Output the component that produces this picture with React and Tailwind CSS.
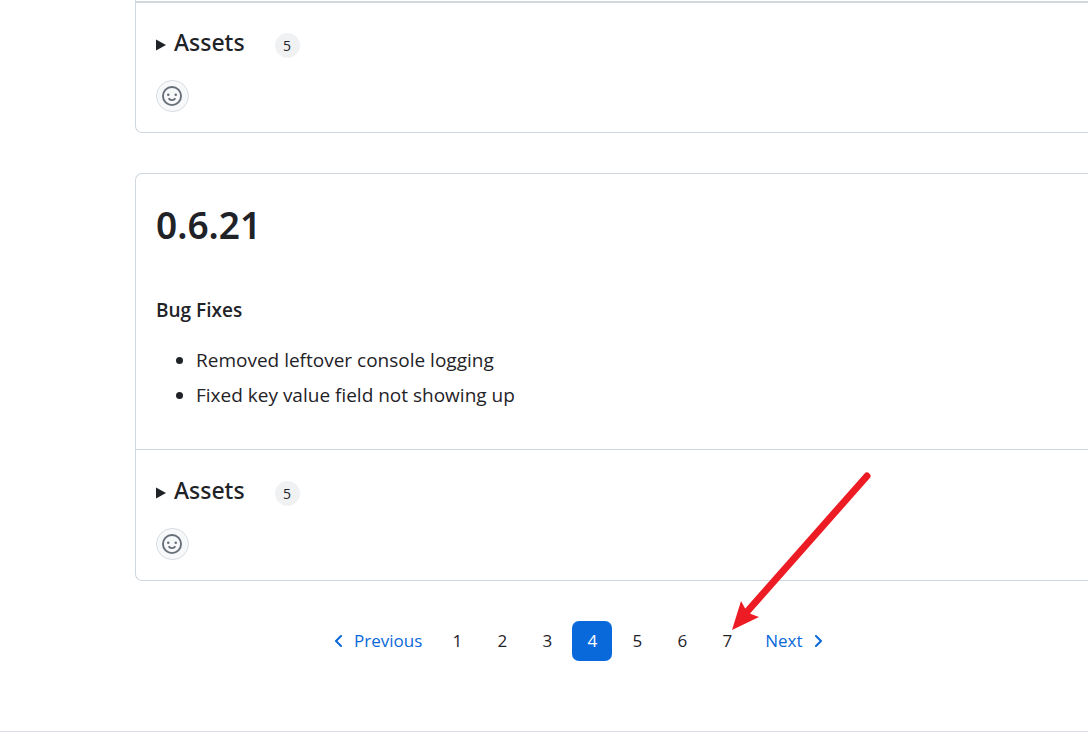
import React from "react";

function Assets({ count }) {
  return (
    <div className="px-5 pt-5 pb-5">
      <details>
        <summary className="flex h-[42px] cursor-pointer list-none items-center [&::-webkit-details-marker]:hidden">
          <svg className="mt-1 mr-2 h-3 w-[10px]" viewBox="0 0 10 12" fill="currentColor" aria-hidden="true">
            <path d="M0 0.5 10 6 0 11.5z" />
          </svg>
          <span className="pb-[2px] font-['Noto_Sans','Open_Sans',sans-serif] text-[23px] leading-[40px] font-medium">Assets</span>
          <span className="mt-1 ml-[30px] flex size-[25px] items-center justify-center rounded-full bg-[#eff1f3] text-[14px] leading-[25px]">
            {count}
          </span>
        </summary>
      </details>
      <button
        type="button"
        aria-label="Add your reaction"
        className="mt-4 flex h-8 w-[33px] items-center justify-start rounded-full border border-[#d8dee4] bg-[#f6f8fa] pl-[5px] text-[#656d76]"
      >
        <svg className="size-5" viewBox="0 0 16 16" fill="currentColor" aria-hidden="true">
          <path d="M8 0a8 8 0 1 1 0 16A8 8 0 0 1 8 0ZM1.5 8a6.5 6.5 0 1 0 13 0 6.5 6.5 0 0 0-13 0Zm3.82 1.636a.75.75 0 0 1 1.038.175l.007.009c.103.118.22.222.35.31.264.178.683.37 1.285.37.602 0 1.02-.192 1.285-.371.13-.088.247-.192.35-.31l.007-.008a.75.75 0 0 1 1.222.87l-.022-.015c.02.013.021.015.021.015v.001l-.001.002-.002.003-.005.007-.014.019a2.066 2.066 0 0 1-.184.213c-.16.166-.338.316-.53.445-.63.418-1.37.638-2.127.629-.946 0-1.652-.308-2.126-.63a3.331 3.331 0 0 1-.715-.657l-.014-.02-.005-.006-.002-.003v-.002h-.001l.613-.432-.614.43a.75.75 0 0 1 .183-1.044ZM12 7a1 1 0 1 1-2 0 1 1 0 0 1 2 0ZM5 8a1 1 0 1 1 0-2 1 1 0 0 1 0 2Z" />
        </svg>
      </button>
    </div>
  );
}

function PageLink({ page, current }) {
  return (
    <a
      href={`#page-${page}`}
      aria-current={current ? "page" : undefined}
      className={
        current
          ? "flex size-10 items-center justify-center rounded-[7px] bg-[#0969da] text-white"
          : "flex size-10 items-center justify-center rounded-[7px]"
      }
    >
      {page}
    </a>
  );
}

export default function App() {
  return (
    <div className="overflow-hidden bg-white font-['Open_Sans','Noto_Sans',sans-serif] text-[#1f2328]">
      <main className="pl-[135px]">
        <section className="rounded-bl-[7px] border-b border-l border-[#d0d7de]">
          <div className="h-[3px] border-b-2 border-[#d0d7de]" />
          <div className="-mt-px">
            <Assets count={5} />
          </div>
        </section>

        <section className="mt-10 rounded-l-[7px] border-y border-l border-[#d0d7de]">
          <div className="border-b border-[#d0d7de] px-5 pt-[21px] pb-[39px]">
            <h1 className="font-['Noto_Sans','Open_Sans',sans-serif] text-[37px] leading-[60px] font-semibold">0.6.21</h1>
            <h2 className="mt-10 text-[19px] leading-[30px] font-semibold">Bug Fixes</h2>
            <ul className="mt-5 list-disc pl-10 text-[19px] leading-[30px]">
              <li>Removed leftover console logging</li>
              <li className="mt-[5px]">Fixed key value field not showing up</li>
            </ul>
          </div>
          <Assets count={5} />
        </section>

        <div className="relative mt-10 ml-[196px]">
          <nav aria-label="Pagination" className="flex h-10 items-center gap-[5px] text-[17px]">
            <a href="#previous" className="mr-[10px] flex items-center gap-3 text-[#0969da]">
              <svg className="ml-[3px] h-3 w-2" viewBox="0 0 8 12" fill="none" stroke="currentColor" strokeWidth="2" aria-hidden="true">
                <path d="M7 1 2 6l5 5" strokeLinecap="round" strokeLinejoin="round" />
              </svg>
              Previous
            </a>
            {[1, 2, 3, 4, 5, 6, 7].map((page) => (
              <PageLink key={page} page={page} current={page === 4} />
            ))}
            <a href="#next" className="ml-[13px] flex items-center gap-3 text-[#0969da]">
              Next
              <svg className="h-3 w-2" viewBox="0 0 8 12" fill="none" stroke="currentColor" strokeWidth="2" aria-hidden="true">
                <path d="m1 1 5 5-5 5" strokeLinecap="round" strokeLinejoin="round" />
              </svg>
            </a>
          </nav>
          <svg
            className="pointer-events-none absolute bottom-[30px] left-[400px] h-[160px] w-[142px]"
            viewBox="0 0 142 160"
            aria-hidden="true"
          >
            <path d="M136 5 14 143" fill="none" stroke="#ed1c24" strokeWidth="7" strokeLinecap="round" />
            <path d="M1 159 10 130 15 139 20 143 28 146z" fill="#ed1c24" />
          </svg>
        </div>
      </main>
      <footer className="mt-[70px] h-[7px] border-t border-[#d8dee4]" />
    </div>
  );
}
